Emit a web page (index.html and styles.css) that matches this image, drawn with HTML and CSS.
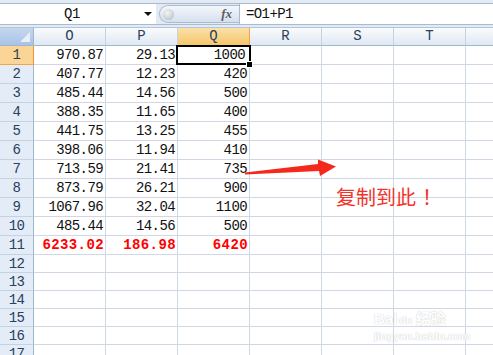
FILE: index.html
```html
<!DOCTYPE html>
<html lang="zh-CN">
<head>
  <meta charset="UTF-8">
  <title>Sheet</title>
  <link rel="stylesheet" href="styles.css">
</head>
<body>
  <div class="fbar">
    <div class="fbox">
      <div class="namebox"><span class="name">Q1</span><span class="drop"></span></div>
      <div class="fxwrap">
        <div class="pill"><span class="knob"></span><span class="fx">fx</span></div>
      </div>
      <div class="formula">=O1+P1</div>
    </div>
  </div>

  <div class="sheet">
    <div class="row head">
      <div class="corner"><span class="tri"></span></div>
      <div class="ch">O</div><div class="ch">P</div><div class="ch sel">Q</div>
      <div class="ch">R</div><div class="ch">S</div><div class="ch">T</div><div class="ch"></div>
    </div>
    <div class="row"><div class="rh sel">1</div><div class="c">970.87</div><div class="c">29.13</div><div class="c active">1000<span class="handle"></span></div><div class="c"></div><div class="c"></div><div class="c"></div><div class="c"></div></div>
    <div class="row"><div class="rh">2</div><div class="c">407.77</div><div class="c">12.23</div><div class="c">420</div><div class="c"></div><div class="c"></div><div class="c"></div><div class="c"></div></div>
    <div class="row"><div class="rh">3</div><div class="c">485.44</div><div class="c">14.56</div><div class="c">500</div><div class="c"></div><div class="c"></div><div class="c"></div><div class="c"></div></div>
    <div class="row"><div class="rh">4</div><div class="c">388.35</div><div class="c">11.65</div><div class="c">400</div><div class="c"></div><div class="c"></div><div class="c"></div><div class="c"></div></div>
    <div class="row"><div class="rh">5</div><div class="c">441.75</div><div class="c">13.25</div><div class="c">455</div><div class="c"></div><div class="c"></div><div class="c"></div><div class="c"></div></div>
    <div class="row"><div class="rh">6</div><div class="c">398.06</div><div class="c">11.94</div><div class="c">410</div><div class="c"></div><div class="c"></div><div class="c"></div><div class="c"></div></div>
    <div class="row"><div class="rh">7</div><div class="c">713.59</div><div class="c">21.41</div><div class="c">735</div><div class="c"></div><div class="c"></div><div class="c"></div><div class="c"></div></div>
    <div class="row"><div class="rh">8</div><div class="c">873.79</div><div class="c">26.21</div><div class="c">900</div><div class="c"></div><div class="c"></div><div class="c"></div><div class="c"></div></div>
    <div class="row"><div class="rh">9</div><div class="c">1067.96</div><div class="c">32.04</div><div class="c">1100</div><div class="c"></div><div class="c"></div><div class="c"></div><div class="c"></div></div>
    <div class="row"><div class="rh">10</div><div class="c">485.44</div><div class="c">14.56</div><div class="c">500</div><div class="c"></div><div class="c"></div><div class="c"></div><div class="c"></div></div>
    <div class="row total"><div class="rh">11</div><div class="c">6233.02</div><div class="c">186.98</div><div class="c">6420</div><div class="c"></div><div class="c"></div><div class="c"></div><div class="c"></div></div>
    <div class="row short"><div class="rh">12</div><div class="c"></div><div class="c"></div><div class="c"></div><div class="c"></div><div class="c"></div><div class="c"></div><div class="c"></div></div>
    <div class="row short"><div class="rh">13</div><div class="c"></div><div class="c"></div><div class="c"></div><div class="c"></div><div class="c"></div><div class="c"></div><div class="c"></div></div>
    <div class="row short"><div class="rh">14</div><div class="c"></div><div class="c"></div><div class="c"></div><div class="c"></div><div class="c"></div><div class="c"></div><div class="c"></div></div>
    <div class="row short"><div class="rh">15</div><div class="c"></div><div class="c"></div><div class="c"></div><div class="c"></div><div class="c"></div><div class="c"></div><div class="c"></div></div>
    <div class="row short"><div class="rh">16</div><div class="c"></div><div class="c"></div><div class="c"></div><div class="c"></div><div class="c"></div><div class="c"></div><div class="c"></div></div>
    <div class="row short"><div class="rh">17</div><div class="c"></div><div class="c"></div><div class="c"></div><div class="c"></div><div class="c"></div><div class="c"></div><div class="c"></div></div>
  </div>

  <!-- annotation drawn over the sheet -->
  <svg class="arrow" width="100" height="40" viewBox="240 150 100 40">
    <polygon points="245,172.5 318,164 318,159.5 336,166.5 320,176 319,171 245,174.5" fill="#f5281e"/>
  </svg>
  <div class="note">复制到此<span class="bang">！</span></div>

  <div class="mark">
    <div class="mark-top">Bai<span class="paw">du</span>经验</div>
    <div class="mark-url">jingyan.baidu.com</div>
  </div>
</body>
</html>
```

FILE: styles.css
```css
body {
  margin: 0;
  width: 493px;
  height: 355px;
  overflow: hidden;
  position: relative;
  background: #fff;
  font-family: "Liberation Mono", "DejaVu Sans Mono", monospace;
}

/* formula bar */
.fbar {
  height: 28px;
  box-sizing: border-box;
  padding-top: 3px;
  background: #e3eaf4;
  border-bottom: 1px solid #b5c5d9;
}
.fbox {
  display: flex;
  height: 22px;
  box-sizing: border-box;
  border-top: 1px solid #a9bbd1;
  border-bottom: 1px solid #a9bbd1;
  background: #fff;
}
.namebox {
  width: 156px;
  display: flex;
  align-items: center;
  font-size: 14px;
  letter-spacing: -0.5px;
}
.name {
  flex: 1;
  text-align: center;
  color: #111;
}
.drop {
  width: 0;
  height: 0;
  border-left: 4px solid transparent;
  border-right: 4px solid transparent;
  border-top: 4px solid #111;
  margin-right: 4px;
}
.fxwrap {
  width: 83px;
  background: #e3eaf4;
  padding: 1px 0 1px 3px;
  box-sizing: border-box;
}
.pill {
  height: 18px;
  border-radius: 9px 0 0 9px;
  background: linear-gradient(#f4f7fb, #d5e0ee);
  border: 1px solid #a9bbd1;
  border-right: none;
  display: flex;
  align-items: center;
  justify-content: space-between;
  box-sizing: border-box;
  padding: 0 7px 0 3px;
}
.knob {
  width: 11px;
  height: 11px;
  border-radius: 50%;
  background: radial-gradient(circle at 40% 35%, #f4f4f4, #b2b8c2);
}
.fx {
  font-family: "Liberation Serif", serif;
  font-style: italic;
  font-weight: bold;
  font-size: 13px;
  color: #5a5f66;
}
.formula {
  flex: 1;
  border-left: 1px solid #a9bbd1;
  padding-left: 6px;
  font-size: 14px;
  letter-spacing: -0.6px;
  line-height: 20px;
  color: #111;
}

/* sheet grid */
.row {
  display: flex;
  height: 19px;
}
.row.short {
  height: 18px;
}
.row.head {
  height: 18px;
}
.corner {
  width: 34px;
  flex: none;
  box-sizing: border-box;
  background: linear-gradient(#c5d7ef, #a9c3e6);
  border-right: 1px solid #9eb6ce;
  border-bottom: 1px solid #9eb6ce;
  position: relative;
}
.tri {
  position: absolute;
  right: 3px;
  bottom: 3px;
  width: 0;
  height: 0;
  border-left: 10px solid transparent;
  border-bottom: 10px solid #e8eff8;
}
.ch {
  width: 72px;
  flex: none;
  box-sizing: border-box;
  background: linear-gradient(#f9fbfd, #e0e8f2);
  border-right: 1px solid #c5d2e2;
  border-bottom: 1px solid #9eb6ce;
  text-align: center;
  font-size: 14px;
  line-height: 17px;
  color: #27415f;
}
.ch.sel {
  background: linear-gradient(#fbe1a9, #f5c66c);
  border-right-color: #f2a545;
  border-bottom-color: #f29436;
}
.rh {
  width: 34px;
  flex: none;
  box-sizing: border-box;
  background: #e4ecf7;
  border-right: 1px solid #9eb6ce;
  border-bottom: 1px solid #c5d2e2;
  text-align: center;
  font-size: 14px;
  letter-spacing: -0.6px;
  line-height: 19px;
  color: #27415f;
}
.short .rh {
  line-height: 18px;
}
.rh.sel {
  background: #fad595;
  border-right-color: #f29436;
  border-bottom-color: #f2a545;
}
.c {
  width: 72px;
  flex: none;
  box-sizing: border-box;
  border-right: 1px solid #d0d7e5;
  border-bottom: 1px solid #d0d7e5;
  text-align: right;
  padding-right: 2px;
  font-size: 14px;
  letter-spacing: -0.6px;
  line-height: 19px;
  color: #111;
  white-space: nowrap;
}
.total .c {
  color: #f00;
  font-weight: bold;
  letter-spacing: 0.4px;
  padding-right: 1px;
}
.c.active {
  position: relative;
  padding-right: 4px;
}
.c.active::before {
  content: "";
  position: absolute;
  left: -2px;
  top: -1px;
  right: -2px;
  bottom: -1px;
  border: 2px solid #000;
}
.handle {
  position: absolute;
  right: -4px;
  bottom: -4px;
  width: 5px;
  height: 5px;
  background: #000;
  border: 1px solid #fff;
}

/* annotation */
.arrow {
  position: absolute;
  left: 240px;
  top: 150px;
}
.note {
  position: absolute;
  left: 336px;
  top: 182px;
  font-family: "Noto Sans CJK SC", sans-serif;
  font-size: 20px;
  color: #f5332a;
  white-space: nowrap;
}
.bang {
  margin-left: 6px;
}

/* watermark */
.mark {
  position: absolute;
  left: 374px;
  top: 310px;
  color: #fff;
  text-shadow: 0 0 1px #c9c9c9, 0 0 1px #c9c9c9;
  font-family: "Liberation Sans", "Noto Sans CJK SC", sans-serif;
  opacity: 0.8;
}
.mark-top {
  font-size: 15px;
  font-weight: bold;
  line-height: 18px;
}
.paw {
  font-size: 11px;
  margin: 0 3px 0 2px;
}
.mark-url {
  font-size: 11px;
  font-weight: bold;
  line-height: 14px;
}
```
